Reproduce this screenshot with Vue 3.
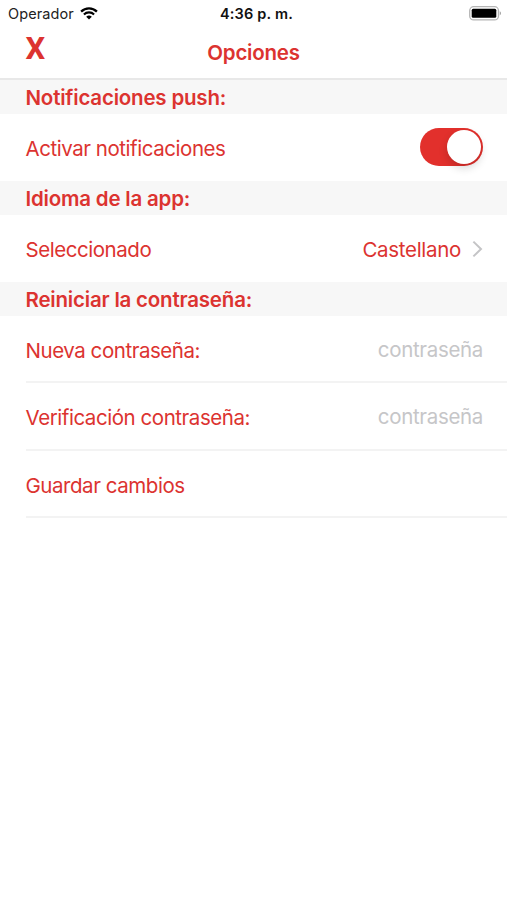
<script setup>
import { ref } from 'vue'

const notifications = ref(true)
const password = ref('')
const confirmation = ref('')
</script>

<template>
  <main class="screen">
    <header class="top">
      <div class="status">
        <div class="carrier">
          <span>Operador</span>
          <svg class="wifi" viewBox="0 0 18 13" width="18" height="13">
            <path d="M1.1 4.6a11.3 11.3 0 0 1 15.8 0" fill="none" stroke="#000" stroke-width="2.3" />
            <path d="M3.9 7.5a7.3 7.3 0 0 1 10.2 0" fill="none" stroke="#000" stroke-width="2.1" />
            <path d="M9 12.6 6.2 9.8a4 4 0 0 1 5.6 0Z" fill="#000" />
          </svg>
        </div>
        <div class="time">4:36 p. m.</div>
        <svg class="battery" viewBox="0 0 33 15" width="33" height="15">
          <rect x="0.7" y="0.7" width="28.8" height="13.2" rx="4" fill="#fff" stroke="#b5b5b5" stroke-width="1.3" />
          <rect x="2.7" y="2.8" width="24.6" height="9" rx="1.5" fill="#000" />
          <path d="M30.8 5.3v4c1.5-.6 1.5-3.4 0-4Z" fill="#999" />
        </svg>
      </div>
      <nav class="nav">
        <button class="close">X</button>
        <h1 class="title">Opciones</h1>
      </nav>
    </header>

    <h2 class="section">Notificaciones push:</h2>
    <div class="row">
      <span>Activar notificaciones</span>
      <button class="toggle" :class="{ on: notifications }" @click="notifications = !notifications">
        <span class="knob"></span>
      </button>
    </div>

    <h2 class="section">Idioma de la app:</h2>
    <div class="row">
      <span>Seleccionado</span>
      <div class="value">
        <span class="language">Castellano</span>
        <svg class="chevron" viewBox="0 0 11 18" width="11" height="18">
          <path d="M1.4 1.6 9 9l-7.6 7.4" fill="none" stroke="#c4c4c6" stroke-width="2" />
        </svg>
      </div>
    </div>

    <h2 class="section">Reiniciar la contraseña:</h2>
    <label class="row lined">
      <span>Nueva contraseña:</span>
      <input v-model="password" class="field" type="password" placeholder="contraseña" />
    </label>
    <label class="row lined">
      <span>Verificación contraseña:</span>
      <input v-model="confirmation" class="field" type="password" placeholder="contraseña" />
    </label>
    <div class="row lined"><span>Guardar cambios</span></div>
  </main>
</template>

<style>
body {
  background: #fff;
}
</style>

<style scoped>
.screen {
  width: 100%;
  height: 900px;
  overflow: hidden;
  background: #fff;
  color: #dc3330;
  font-family: Inter, 'Liberation Sans', sans-serif;
  font-size: 20.5px;
}
button {
  padding: 0;
  border: 0;
  background: none;
  font: inherit;
  color: inherit;
}
.top {
  box-sizing: border-box;
  height: 80px;
  border-bottom: 2px solid #e8e8e8;
}
.status {
  display: grid;
  grid-template-columns: 1fr auto 1fr;
  align-items: center;
  height: 27px;
  padding: 0 5px 0 8px;
  color: #222;
  font-size: 14.5px;
}
.carrier {
  display: flex;
  align-items: center;
  gap: 6px;
  letter-spacing: 0.1px;
}
.time {
  font-weight: 600;
  color: #111;
  letter-spacing: 0.2px;
  margin-left: 3px;
}
.battery {
  justify-self: end;
}
.nav {
  display: grid;
  grid-template-columns: 1fr auto 1fr;
  align-items: center;
  height: 51px;
  padding: 0 25.5px;
}
.close {
  justify-self: start;
  font-family: Roboto, sans-serif;
  font-size: 31px;
  font-weight: 700;
  line-height: 36px;
  margin-bottom: 7px;
}
.title {
  margin: 0;
  font-size: 20.5px;
  font-weight: 600;
  letter-spacing: -0.24px;
}
.section {
  box-sizing: border-box;
  display: flex;
  align-items: center;
  height: 34px;
  margin: 0;
  padding: 1px 0 0 25.5px;
  background: #f7f7f7;
  font-size: 20.5px;
  font-weight: 600;
  letter-spacing: -0.2px;
}
.row {
  box-sizing: border-box;
  display: flex;
  align-items: center;
  justify-content: space-between;
  height: 67px;
  margin-left: 25.5px;
  padding: 2px 24px 0 0;
  letter-spacing: -0.45px;
}
.lined {
  height: 67.3px;
  padding-top: 4px;
  border-bottom: 2px solid #f3f3f3;
}
.toggle {
  display: flex;
  align-items: center;
  justify-content: flex-start;
  width: 63px;
  height: 38px;
  margin-bottom: 3px;
  padding: 2px;
  border-radius: 19px;
  background: #e5e5e5;
}
.toggle.on {
  justify-content: flex-end;
  background: #e2302c;
}
.knob {
  width: 34px;
  height: 34px;
  border-radius: 50%;
  background: #fff;
  box-shadow: 0 4px 8px rgba(0, 0, 0, 0.16);
}
.value {
  display: flex;
  align-items: center;
  gap: 11px;
}
.language {
  letter-spacing: -0.3px;
}
.chevron {
  margin-bottom: 2px;
}
.field {
  width: 160px;
  margin-bottom: 3px;
  padding: 0;
  border: 0;
  outline: 0;
  background: none;
  font: inherit;
  color: inherit;
  letter-spacing: -0.33px;
  text-align: right;
}
.field::placeholder {
  color: #c6c6c8;
  opacity: 1;
}
</style>
